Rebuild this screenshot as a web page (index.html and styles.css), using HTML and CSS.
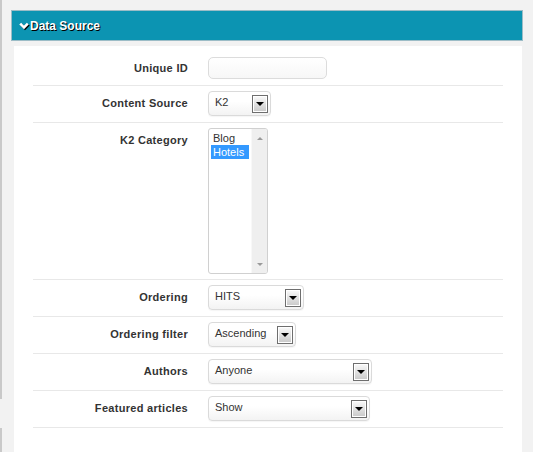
FILE: index.html
```html
<!DOCTYPE html>
<html>
<head>
<meta charset="utf-8">
<link rel="stylesheet" href="styles.css">
</head>
<body>
<div class="page">
  <div class="edge"><div class="seg seg-top"></div><div class="seg seg-bottom"></div></div>
  <div class="main">
    <div class="header">
      <svg class="chev" width="10" height="8" viewBox="0 0 10 8"><polyline points="1.2,1.6 5,5.4 8.8,1.6" fill="none" stroke="#fff" stroke-width="2.6"/></svg>
      <span class="title">Data Source</span>
    </div>
    <div class="panel">
      <div class="row row-first">
        <div class="label short">Unique ID</div>
        <div class="control"><div class="input"></div></div>
      </div>
      <div class="row">
        <div class="label">Content Source</div>
        <div class="control"><div class="select w63"><span class="val">K2</span><span class="btn"><span class="tri"></span></span></div></div>
      </div>
      <div class="row row-list">
        <div class="label">K2 Category</div>
        <div class="control">
          <div class="listbox">
            <div class="items">
              <div class="item">Blog</div>
              <div class="item selected">Hotels</div>
            </div>
            <div class="scroll"><span class="up"></span><span class="down"></span></div>
          </div>
        </div>
      </div>
      <div class="row">
        <div class="label">Ordering</div>
        <div class="control"><div class="select w96"><span class="val">HITS</span><span class="btn"><span class="tri"></span></span></div></div>
      </div>
      <div class="row">
        <div class="label">Ordering filter</div>
        <div class="control"><div class="select w88"><span class="val">Ascending</span><span class="btn"><span class="tri"></span></span></div></div>
      </div>
      <div class="row">
        <div class="label">Authors</div>
        <div class="control"><div class="select w164"><span class="val">Anyone</span><span class="btn"><span class="tri"></span></span></div></div>
      </div>
      <div class="row">
        <div class="label">Featured articles</div>
        <div class="control"><div class="select w162"><span class="val">Show</span><span class="btn"><span class="tri"></span></span></div></div>
      </div>
    </div>
  </div>
</div>
</body>
</html>
```
FILE: styles.css
```css
html, body {
  margin: 0;
  padding: 0;
  background: #f2f2f2;
  font-family: "Liberation Sans", Arial, sans-serif;
  color: #333;
}
.page {
  display: flex;
  min-height: 452px;
}
.edge {
  width: 2px;
  display: flex;
  flex-direction: column;
}
.seg {
  background: #c9c9c9;
}
.seg-top {
  height: 399px;
}
.seg-bottom {
  margin-top: 29px;
  flex: 1;
}
.main {
  flex: 1;
  padding: 10px 10px 0 9px;
  display: flex;
  flex-direction: column;
}
.header {
  height: 29px;
  background: #0c94b2;
  border: 1px solid #9cbcc6;
  display: flex;
  align-items: center;
  padding-left: 7px;
}
.chev {
  filter: drop-shadow(1px 1px 0 #000);
  margin-right: 1px;
  margin-top: 1px;
}
.title {
  color: #fff;
  font-weight: bold;
  font-size: 12px;
  text-shadow: 1px 1px 0 #000;
}
.panel {
  flex: 1;
  background: #fff;
  margin: 5px 1px 0 3px;
  padding: 0 19px;
}
.row {
  display: grid;
  grid-template-columns: 155px 1fr;
  column-gap: 20px;
  padding: 5px 0 6px;
  border-bottom: 1px solid #e8e8e8;
}
.row-first {
  padding-top: 11px;
}
.row-list {
  padding-bottom: 5px;
}
.label {
  text-align: right;
  font-size: 11px;
  font-weight: bold;
  letter-spacing: 0.3px;
  line-height: 25px;
  color: #333;
}
.label.short {
  line-height: 22px;
}
.input {
  width: 117px;
  height: 20px;
  border: 1px solid #dcdcdc;
  border-radius: 5px;
  background: linear-gradient(#fff, #f7f7f7);
}
.select {
  box-sizing: border-box;
  height: 25px;
  border: 1px solid #dadada;
  border-radius: 4px;
  background: linear-gradient(#fff 40%, #f3f3f3);
  box-shadow: 0 1px 1px rgba(0,0,0,0.04);
  display: flex;
  align-items: center;
  justify-content: space-between;
  padding: 0 2px 0 6px;
}
.w63 { width: 63px; }
.w96 { width: 96px; }
.w88 { width: 88px; }
.w164 { width: 164px; }
.w162 { width: 162px; }
.val {
  font-size: 11px;
  color: #333;
  margin-top: -3px;
}
.btn {
  box-sizing: border-box;
  width: 16px;
  height: 18px;
  border: 1px solid #6e6e6e;
  box-shadow: inset 0 0 0 1px #fff;
  background: linear-gradient(#fafafa, #c8c8c8);
  display: flex;
  align-items: center;
  justify-content: center;
}
.tri {
  width: 0;
  height: 0;
  border-left: 4px solid transparent;
  border-right: 4px solid transparent;
  border-top: 4px solid #000;
  margin-top: 1px;
}
.listbox {
  box-sizing: border-box;
  width: 60px;
  height: 146px;
  border: 1px solid #d0d0d0;
  border-radius: 3px;
  display: flex;
  overflow: hidden;
}
.items {
  flex: 1;
  padding: 2px 2px 0 2px;
}
.item {
  font-size: 11px;
  line-height: 14px;
  padding-left: 2px;
  color: #333;
}
.item.selected {
  background: #3399ff;
  color: #fff;
}
.scroll {
  width: 15px;
  background: #efefef;
  border-left: 1px solid #f8f8f8;
  display: flex;
  flex-direction: column;
  justify-content: space-between;
  align-items: center;
  padding: 8px 0 7px;
}
.up {
  width: 0;
  height: 0;
  border-left: 3px solid transparent;
  border-right: 3px solid transparent;
  border-bottom: 3px solid #9a9a9a;
}
.down {
  width: 0;
  height: 0;
  border-left: 3px solid transparent;
  border-right: 3px solid transparent;
  border-top: 3px solid #9a9a9a;
}
```
